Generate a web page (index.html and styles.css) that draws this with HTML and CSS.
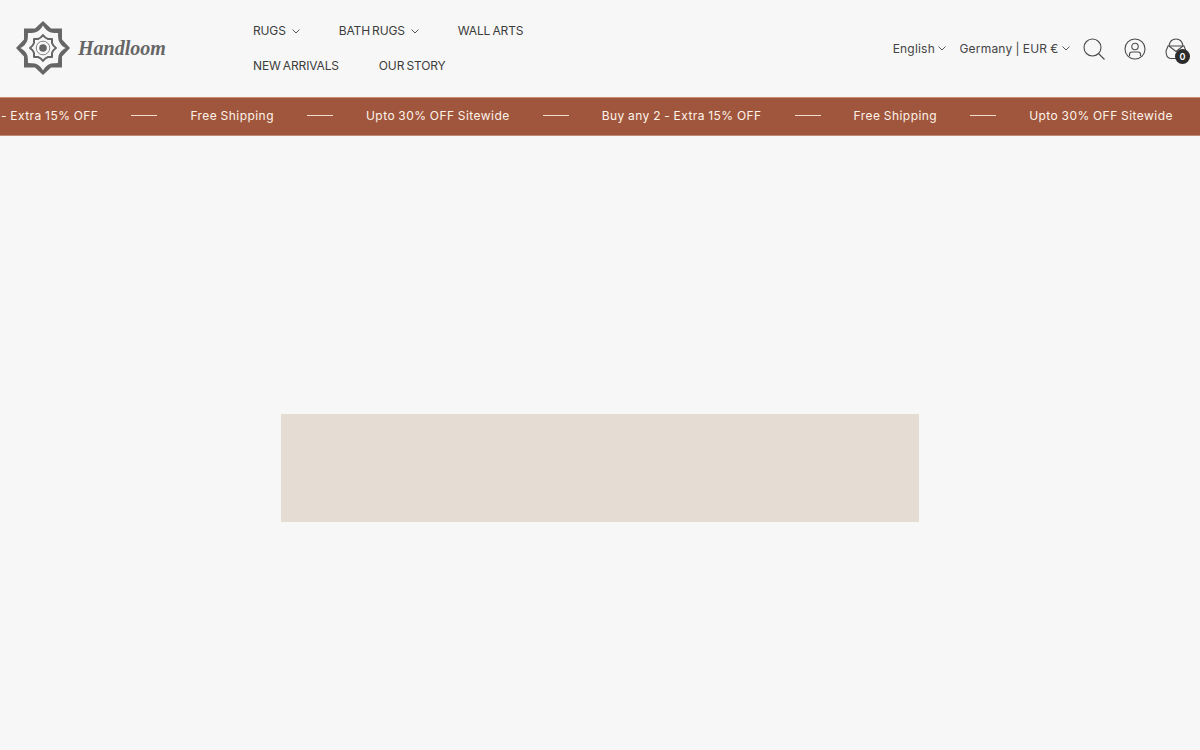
FILE: index.html
```html
<!DOCTYPE html>
<html lang="en">
<head>
<meta charset="utf-8">
<title>Handloom</title>
<link rel="stylesheet" href="styles.css">
</head>
<body>
<header class="header">
  <a class="logo" href="#">
    <svg class="logo-mark" width="54" height="54" viewBox="0 0 54 54">
      <path fill="#666" d="M27 0 L35 7.500 L46 7.500 L46 18.500 L54 27 L46 35.500 L46 46.500 L35 46.500 L27 54 L19 46.500 L8 46.500 L8 35.500 L0 27 L8 18.500 L8 7.500 L19 7.500 Z"/>
      <path fill="#f7f7f7" d="M27 4.500 Q30 10 35 11.500 Q38 12 42 12 Q42 16 42.500 19 Q44 24 49.500 27 Q44 30 42.500 35 Q42 38 42 42 Q38 42 35 42.500 Q30 44 27 49.500 Q24 44 19 42.500 Q16 42 12 42 Q12 38 11.500 35 Q10 30 4.500 27 Q10 24 11.500 19 Q12 16 12 12 Q16 12 19 11.500 Q24 10 27 4.500 Z"/>
      <path fill="#f7f7f7" stroke="#666" stroke-width="2" stroke-linejoin="round" d="M27 14 Q29 17 32 18 Q35 18 36 18 Q36 21 36 22 Q37 25 40 27 Q37 29 36 32 Q36 35 36 36 Q33 36 32 36 Q29 37 27 40 Q25 37 22 36 Q19 36 18 36 Q18 33 18 32 Q17 29 14 27 Q17 25 18 22 Q18 19 18 18 Q21 18 22 18 Q25 17 27 14 Z"/>
      <circle cx="27" cy="27" r="6.800" fill="none" stroke="#777" stroke-width="0.900"/>
      <circle cx="27" cy="27" r="3.800" fill="#666"/>
    </svg>
    <span class="logo-text">Handloom</span>
  </a>
  <nav class="nav">
    <a class="nav-link nav-gap-a" href="#">RUGS<svg class="chev nav-chev" width="8" height="5" viewBox="0 0 8 5"><path d="M.5.5 4 4 7.500.5"/></svg></a>
    <a class="nav-link nav-gap-b" href="#">BATH RUGS<svg class="chev nav-chev" width="8" height="5" viewBox="0 0 8 5"><path d="M.5.5 4 4 7.500.5"/></svg></a>
    <a class="nav-link" href="#">WALL ARTS</a>
    <a class="nav-link nav-gap-c" href="#">NEW ARRIVALS</a>
    <a class="nav-link" href="#">OUR STORY</a>
  </nav>
  <div class="tools">
    <a class="select select-lang" href="#">English<svg class="chev" width="8" height="5" viewBox="0 0 8 5"><path d="M.5.5 4 4 7.500.5"/></svg></a>
    <a class="select select-country" href="#">Germany | EUR €<svg class="chev" width="8" height="5" viewBox="0 0 8 5"><path d="M.5.5 4 4 7.500.5"/></svg></a>
    <a class="icon icon-search" href="#" aria-label="Search">
      <svg width="22" height="22" viewBox="0 0 22 22"><circle cx="9.500" cy="9.500" r="8.500"/><path d="M15.500 15.500 21.500 21.500"/></svg>
    </a>
    <a class="icon icon-user" href="#" aria-label="Account">
      <svg width="22" height="22" viewBox="0 0 22 22"><circle cx="11" cy="11" r="10"/><circle cx="11" cy="8.500" r="3.200"/><path d="M5.500 18V16.500Q5.500 14 8 14H14Q16.500 14 16.500 16.500V18"/></svg>
    </a>
    <a class="icon icon-cart" href="#" aria-label="Cart">
      <svg width="22" height="22" viewBox="0 0 22 22"><path d="M4 8Q5 1 11 1T18 8"/><path d="M3 8H19L21 13Q21 20.500 16 20.500H6Q1 20.500 1 13Z"/><path d="M4 8 11 13.500 18 8"/></svg>
      <span class="badge">0</span>
    </a>
  </div>
</header>
<div class="marquee">
  <div class="track">
    <span class="msg">Buy any 2 - Extra 15% OFF</span><span class="rule"></span>
    <span class="msg">Free Shipping</span><span class="rule"></span>
    <span class="msg">Upto 30% OFF Sitewide</span><span class="rule"></span>
    <span class="msg">Buy any 2 - Extra 15% OFF</span><span class="rule"></span>
    <span class="msg">Free Shipping</span><span class="rule"></span>
    <span class="msg">Upto 30% OFF Sitewide</span><span class="rule"></span>
  </div>
</div>
<main class="main">
  <div class="placeholder"></div>
</main>
</body>
</html>
```

FILE: styles.css
```css
* { box-sizing: border-box; }
html, body { margin: 0; height: 100%; overflow: hidden; }
body {
  background: #f7f7f7;
  color: #333;
  font-family: Inter, "Liberation Sans", sans-serif;
}
a { color: inherit; text-decoration: none; }

.header {
  height: 97px;
  display: flex;
  align-items: flex-start;
  padding-left: 16px;
  position: relative;
}
.logo {
  display: flex;
  align-items: center;
  width: 237px;
  height: 54px;
  margin-top: 21px;
  flex: none;
}
.logo-mark { flex: none; }
.logo-text {
  margin-left: 8px;
  font-family: "Liberation Serif", cursive;
  font-style: italic;
  font-weight: 700;
  font-size: 20px;
  color: #666;
}
.nav {
  width: 300px;
  display: flex;
  flex-wrap: wrap;
  row-gap: 19px;
  padding-top: 23px;
}
.nav-link {
  display: inline-flex;
  align-items: center;
  font-size: 12px;
  line-height: 16px;
  letter-spacing: -0.15px;
  word-spacing: -1px;
  color: #3c3c3c;
}
.nav-gap-a { margin-right: 39px; }
.nav-gap-b { margin-right: 39px; }
.nav-gap-c { margin-right: 40px; }
.nav-chev { margin-left: 6px; }
.chev { fill: none; stroke: #444; stroke-width: 0.9; }
.tools {
  margin-left: auto;
  display: flex;
  align-items: center;
  height: 97px;
  padding-right: 13px;
}
.select {
  display: inline-flex;
  align-items: center;
  font-size: 12px;
  letter-spacing: 0.2px;
  word-spacing: -0.5px;
  color: #444;
  gap: 3.5px;
}
.select-lang { margin-right: 13px; }
.select-country { margin-right: 13px; }
.icon { position: relative; display: block; width: 22px; height: 22px; }
.icon svg { display: block; fill: none; stroke: #4a4a4a; stroke-width: 1.1; }
.icon-user { margin-left: 19px; }
.icon-cart { margin-left: 19px; }
.badge {
  position: absolute;
  right: -3px;
  bottom: -4px;
  width: 15px;
  height: 15px;
  border-radius: 50%;
  background: #2b2b2b;
  color: #fff;
  font-size: 9px;
  font-weight: 600;
  line-height: 15px;
  text-align: center;
}

.marquee {
  height: 39px;
  background: #a0563c;
  border-top: 1px solid #c98d72;
  border-bottom: 1px solid #c08a72;
  overflow: hidden;
  display: flex;
  align-items: center;
  padding-bottom: 2px;
}
.track {
  display: flex;
  align-items: center;
  flex: none;
  margin-left: -61.5px;
  color: #fdf3ea;
  font-size: 12px;
  font-weight: 400;
  letter-spacing: 0.45px;
  word-spacing: -0.5px;
  white-space: nowrap;
}
.rule {
  width: 26px;
  height: 1px;
  background: #f3ddcf;
  margin: 0 33px;
  flex: none;
}
.main { padding-top: 278px; }
.placeholder {
  width: 638px;
  height: 108px;
  margin: 0 auto;
  background: #e5ddd3;
}
```
